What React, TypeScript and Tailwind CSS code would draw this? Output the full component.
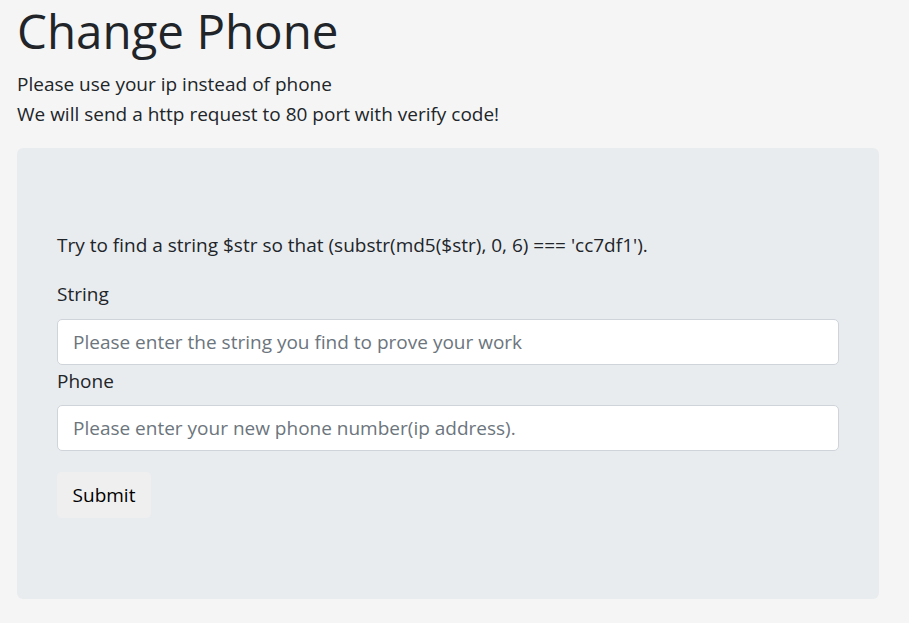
export default function App() {
  return (
    <div className="min-h-screen bg-[#f5f5f5] pl-[17px] pr-[30px] font-['Open_Sans',sans-serif] text-[#212529]">
      <h1 className="text-[47.5px] leading-[62px] font-normal">Change Phone</h1>
      <div className="mt-[7px] text-[19px] leading-[30px]">
        <p>Please use your ip instead of phone</p>
        <p>We will send a http request to 80 port with verify code!</p>
      </div>
      <div className="mt-[19px] h-[451px] rounded-[6px] bg-[#e9ecef] px-[40px] pt-[82px]">
        <p className="text-[19px] leading-[30px]">
          Try to find a string $str so that (substr(md5($str), 0, 6) === 'cc7df1').
        </p>
        <form className="mt-[19px]" onSubmit={(e) => e.preventDefault()}>
          <label className="block text-[19px] leading-[30px]">String</label>
          <input
            type="text"
            placeholder="Please enter the string you find to prove your work"
            className="mt-[10px] block h-[46px] w-full rounded-[5px] border border-[#ced4da] bg-white px-[15px] text-[19px] text-[#495057] outline-none placeholder:text-[#6c757d]"
          />
          <label className="block pt-[1px] text-[19px] leading-[30px]">Phone</label>
          <input
            type="text"
            placeholder="Please enter your new phone number(ip address)."
            className="mt-[9px] block h-[46px] w-full rounded-[5px] border border-[#ced4da] bg-white px-[15px] text-[19px] text-[#495057] outline-none placeholder:text-[#6c757d]"
          />
          <button
            type="submit"
            className="mt-[21px] h-[46px] w-[94px] rounded-[5px] bg-[#efefef] text-[19px] text-black"
          >
            Submit
          </button>
        </form>
      </div>
    </div>
  )
}
